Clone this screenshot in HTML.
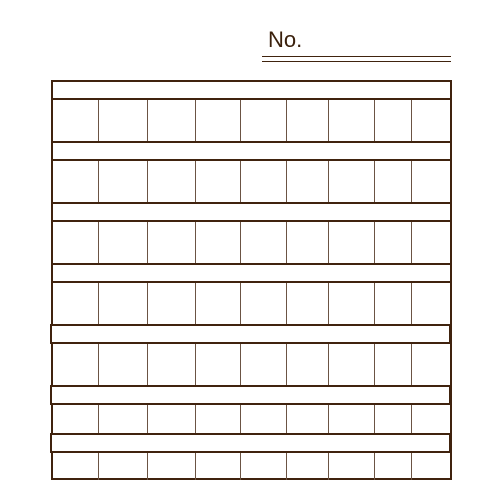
<!DOCTYPE html><html><head><style>
body{margin:0;width:500px;height:501px;background:#fff;position:relative;overflow:hidden;font-family:"Liberation Sans",sans-serif}
div{position:absolute;box-sizing:border-box}
.b{height:20px;border:2px solid #40230e;background:#fff}
.v{width:1.5px;background:#6b5444}
.h{height:1.5px;background:#40230e}
</style></head><body>
<div style="left:268px;top:27px;font-size:22px;color:#3a200c;line-height:26px">No.</div>
<div class="h" style="left:262px;top:55.5px;width:189px"></div>
<div class="h" style="left:262px;top:60.5px;width:189px"></div>
<!-- outer frame -->
<div style="left:51px;top:80px;width:401px;height:400px;border:2px solid #40230e"></div>
<div class="v" style="left:97.5px;top:80px;height:400px"></div>
<div class="v" style="left:146.5px;top:80px;height:400px"></div>
<div class="v" style="left:194.5px;top:80px;height:400px"></div>
<div class="v" style="left:239.5px;top:80px;height:400px"></div>
<div class="v" style="left:285.5px;top:80px;height:400px"></div>
<div class="v" style="left:327.5px;top:80px;height:400px"></div>
<div class="v" style="left:373.5px;top:80px;height:400px"></div>
<div class="v" style="left:410.5px;top:80px;height:400px"></div>
<div class="b" style="left:51px;top:80px;width:401px"></div>
<div class="b" style="left:51px;top:141px;width:401px"></div>
<div class="b" style="left:51px;top:202px;width:401px"></div>
<div class="b" style="left:51px;top:263px;width:401px"></div>
<div class="b" style="left:50px;top:324px;width:401px"></div>
<div class="b" style="left:50px;top:385px;width:401px"></div>
<div class="b" style="left:50px;top:433px;width:401px"></div>
</body></html>
